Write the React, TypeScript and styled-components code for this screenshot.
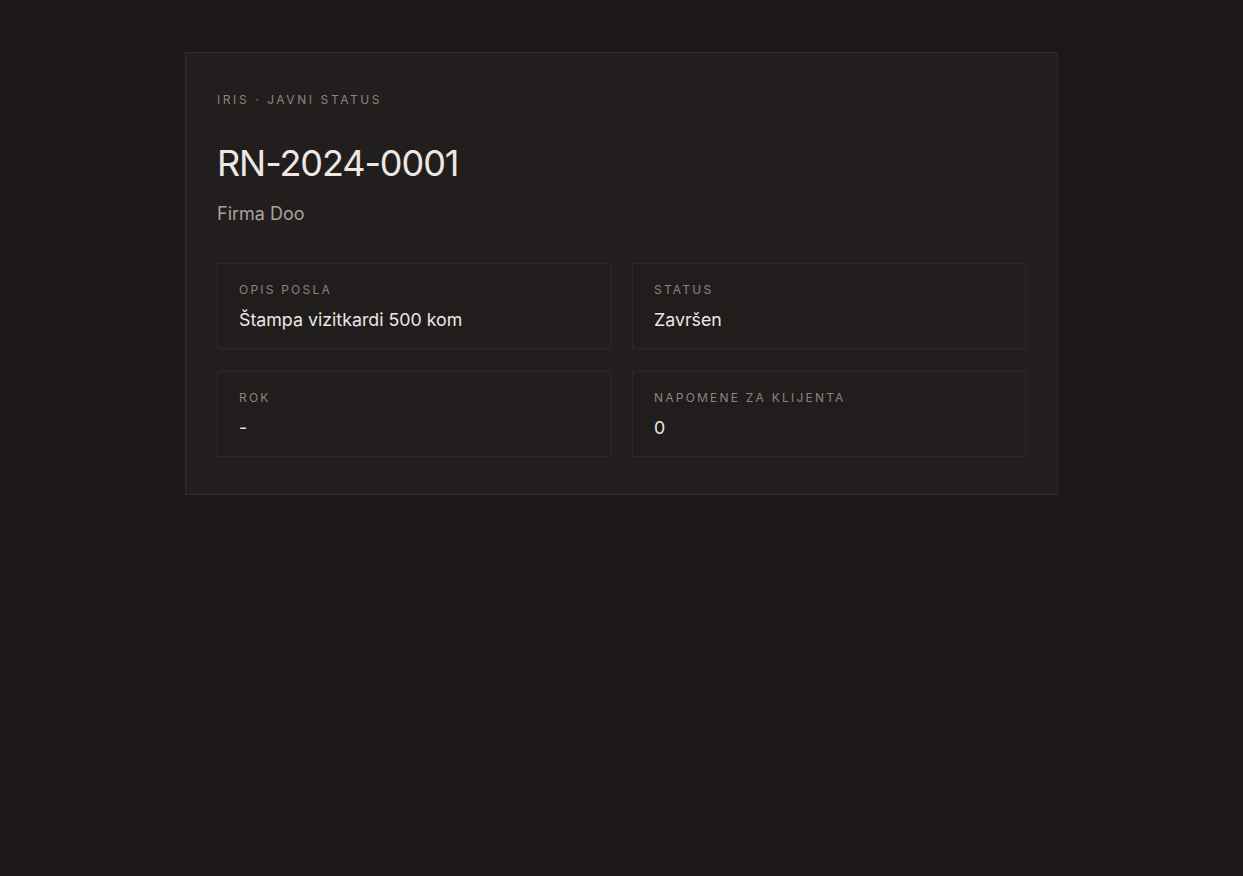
import React from "react";
import styled, { createGlobalStyle } from "styled-components";

const GlobalStyle = createGlobalStyle`
  * {
    box-sizing: border-box;
  }

  html,
  body {
    margin: 0;
    padding: 0;
    background-color: #1b1817;
  }

  body {
    font-family: Inter, "Noto Sans", "Liberation Sans", sans-serif;
    color: #ebe7e3;
    min-height: 100vh;
  }
`;

const Page = styled.main`
  padding: 52px 0;
`;

const Card = styled.section`
  width: 873px;
  margin: 0 auto;
  padding: 39px 31px 37px;
  background-color: #211e1d;
  border: 1px solid #2f2c2a;
`;

const Eyebrow = styled.div`
  font-size: 12px;
  line-height: 16px;
  letter-spacing: 0.215em;
  text-transform: uppercase;
  color: #8a8581;
`;

const Title = styled.h1`
  margin: 33px 0 0;
  font-size: 36px;
  line-height: 44px;
  font-weight: 400;
  letter-spacing: -0.03em;
  color: #ece8e4;
`;

const Client = styled.p`
  margin: 17px 0 0;
  font-size: 18px;
  line-height: 24px;
  color: #a8a29e;
`;

const Grid = styled.div`
  display: grid;
  grid-template-columns: 1fr 1fr;
  column-gap: 21px;
  row-gap: 22px;
  margin-top: 37px;
`;

const Field = styled.div`
  padding: 18px 21px 16px;
  background-color: #201d1c;
  border: 1px solid #2c2928;
`;

const FieldLabel = styled.div`
  font-size: 12px;
  line-height: 16px;
  letter-spacing: 0.185em;
  text-transform: uppercase;
  color: #8a8581;
`;

const FieldValue = styled.div`
  margin-top: 10px;
  font-size: 17.8px;
  line-height: 24px;
  color: #ebe7e3;
`;

const fields = [
  { label: "Opis posla", value: "Štampa vizitkardi 500 kom" },
  { label: "Status", value: "Završen" },
  { label: "Rok", value: "-" },
  { label: "Napomene za klijenta", value: "0" },
];

function App() {
  return (
    <>
      <GlobalStyle />
      <Page>
        <Card>
          <Eyebrow>IRIS · Javni status</Eyebrow>
          <Title>RN-2024-0001</Title>
          <Client>Firma Doo</Client>
          <Grid>
            {fields.map((f) => (
              <Field key={f.label}>
                <FieldLabel>{f.label}</FieldLabel>
                <FieldValue>{f.value}</FieldValue>
              </Field>
            ))}
          </Grid>
        </Card>
      </Page>
    </>
  );
}

export default App;
